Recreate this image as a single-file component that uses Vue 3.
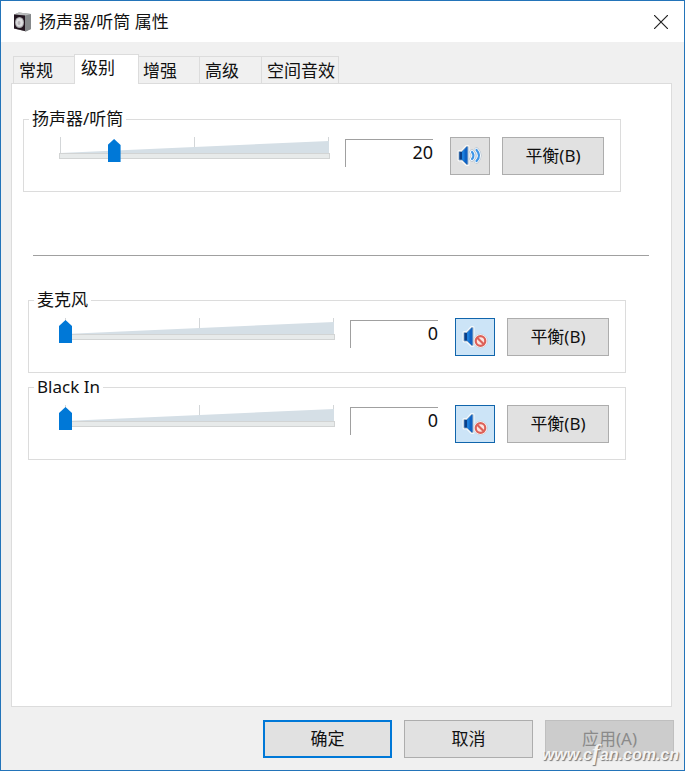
<script setup>
import { ref, reactive } from 'vue'

const tabs = ['常规', '级别', '增强', '高级', '空间音效']
const activeTab = ref('级别')

const output = reactive([{ id: 'speaker', name: '扬声器/听筒', level: 20, muted: false }])
const inputs = reactive([
  { id: 'mic', name: '麦克风', level: 0, muted: true },
  { id: 'black', name: 'Black In', level: 0, muted: true },
])
const sections = [
  { key: 'output', channels: output },
  { key: 'input', channels: inputs },
]
</script>

<template>
  <main class="window">
    <header class="titlebar">
      <svg class="app-icon" viewBox="0 0 18 20" aria-hidden="true">
        <path d="M0 2.500 L5 .5 L17 2 V17 L12 19.500 L0 16.500Z" fill="#8b8b8b" />
        <path d="M11 3.300 L17 2 V17 L11 19.500Z" fill="#85888a" />
        <path d="M0 2.500 L5 .5 L17 2 L11 3.500Z" fill="#b9bbbc" />
        <path d="M0 2.500 L11 3.500 V19 L0 16.500Z" fill="#231520" />
        <ellipse cx="5.500" cy="10.500" rx="4.500" ry="5.600" fill="#a9a9ab" />
        <ellipse cx="5.500" cy="10.500" rx="3.400" ry="4.300" fill="#dedee0" />
        <ellipse cx="5" cy="11" rx="1.500" ry="2" fill="#b8b4b8" />
      </svg>
      <h1 class="title">扬声器/听筒 属性</h1>
      <button class="close" type="button" aria-label="关闭">
        <svg viewBox="0 0 14 14" aria-hidden="true">
          <path d="M0 0 L14 14 M14 0 L0 14" stroke="#222" stroke-width="1.200" fill="none" />
        </svg>
      </button>
    </header>

    <div class="tabs" role="tablist">
      <button
        v-for="tab in tabs"
        :key="tab"
        type="button"
        role="tab"
        class="tab"
        :class="{ active: tab === activeTab }"
        :aria-selected="tab === activeTab"
        @click="activeTab = tab"
      >{{ tab }}</button>
    </div>

    <section class="panel">
      <div v-for="section in sections" :key="section.key" class="section" :class="section.key">
        <fieldset v-for="ch in section.channels" :key="ch.id" class="group">
          <legend>{{ ch.name }}</legend>
          <div class="row">
            <div class="slider">
              <div class="scale">
                <div class="wedge"></div>
                <i></i><i></i><i></i>
              </div>
              <input v-model.number="ch.level" type="range" min="0" max="100" :aria-label="ch.name + ' 音量'" />
            </div>
            <input v-model.number="ch.level" class="value" type="text" :aria-label="ch.name + ' 级别'" />
            <button
              type="button"
              class="btn mute"
              :class="{ muted: ch.muted }"
              :aria-pressed="ch.muted"
              aria-label="静音"
              @click="ch.muted = !ch.muted"
            >
              <svg viewBox="0 0 26 24" aria-hidden="true">
                <path
                  d="M2 7.500 H5 L9.500 2.500 H11 V20.500 H9.500 L5 16 H2Z"
                  fill="none" stroke="#fff" stroke-opacity=".75" stroke-width="3" stroke-linejoin="round"
                />
                <path
                  d="M2 7.500 H5 L9.500 2.500 H11 V20.500 H9.500 L5 16 H2Z"
                  fill="#0f62c4" stroke="#9fb4c8" stroke-width="1"
                />
                <path d="M2.500 8 H5 V15.500 H2.500Z" fill="#0b3f86" />
                <path d="M5 8 L7.500 5.500 V17.800 L5 15.500Z" fill="#1d7fdc" />
                <template v-if="ch.muted">
                  <circle cx="18.500" cy="16" r="6.900" fill="#fff" stroke="#b9c3cc" stroke-width=".6" />
                  <circle cx="18.500" cy="16" r="4.800" fill="#fbe4e0" stroke="#dc6159" stroke-width="2.200" />
                  <path d="M15.200 12.700 L21.800 19.300" stroke="#dc6159" stroke-width="2.200" />
                </template>
                <g v-else fill="none" stroke-linecap="round">
                  <path d="M15 8 Q18 11.500 15 15 M19.500 6 Q24.500 11.500 19.500 17" stroke="#b5c2ce" stroke-width="5" />
                  <path d="M15 8 Q18 11.500 15 15 M19.500 6 Q24.500 11.500 19.500 17" stroke="#f5faff" stroke-width="4" />
                  <path d="M15 8 Q18 11.500 15 15 M19.500 6 Q24.500 11.500 19.500 17" stroke="#3d95e6" stroke-width="2.200" />
                </g>
              </svg>
            </button>
            <button type="button" class="btn balance">平衡(B)</button>
          </div>
        </fieldset>
      </div>
    </section>

    <footer class="actions">
      <button type="button" class="btn primary">确定</button>
      <button type="button" class="btn">取消</button>
      <button type="button" class="btn" disabled>应用(A)</button>
      <span class="watermark">www.c<em>f</em>an.com.cn</span>
    </footer>
  </main>
</template>

<style>
body {
  margin: 0;
}
</style>

<style scoped>
.window {
  box-sizing: border-box;
  min-height: 100vh;
  display: flex;
  flex-direction: column;
  border: 1px solid #2374b9;
  background: #f0f0f0;
  color: #111;
  font: 17px/24px "Noto Sans", "Noto Sans CJK SC", sans-serif;
}

button,
input {
  box-sizing: border-box;
  margin: 0;
  font: inherit;
  color: inherit;
}

.titlebar {
  display: flex;
  align-items: center;
  height: 41px;
  padding: 0 16px 0 13px;
  background: #fff;
}

.app-icon {
  width: 18px;
  height: 20px;
}

.title {
  flex: 1;
  margin: 0 0 0 7px;
  font: inherit;
}

.close {
  display: flex;
  padding: 0;
  border: 0;
  background: none;
}

.close svg {
  width: 14px;
  height: 14px;
}

.tabs {
  display: flex;
  align-items: flex-end;
  height: 29px;
  padding: 12px 12px 0;
}

.tab {
  min-width: 62px;
  height: 27px;
  padding: 1px 3px 0 5px;
  border: 1px solid #dcdcdc;
  border-width: 1px 0 0 1px;
  background: #f0f0f0;
  text-align: left;
  line-height: 24px;
}

.tab:last-child {
  border-right-width: 1px;
}

.tab.active {
  z-index: 1;
  min-width: 65px;
  height: 30px;
  margin: 0 -2px -1px -1px;
  padding: 0 6px 3px;
  border-right-width: 1px;
  background: #fff;
}

.panel {
  flex: 1;
  margin: 0 12px 0 10px;
  padding-top: 23px;
  border: 1px solid #dcdcdc;
  background: #fff;
}

.section {
  display: flex;
  flex-direction: column;
  gap: 2px;
}

.section.output {
  padding: 0 50px 0 11px;
}

.section.input {
  padding: 0 45px 0 16px;
}

.section.input::before {
  content: "";
  height: 1px;
  margin: 63px -23px 30px 5px;
  background: #a0a0a0;
}

.group {
  min-width: 0;
  margin: 0;
  padding: 6px 16px 16px 30px;
  border: 1px solid #dcdcdc;
}

.group legend {
  margin-left: -25px;
  padding: 0 3px;
}

.row {
  display: flex;
  align-items: flex-start;
}

.slider {
  position: relative;
  flex: 1;
  min-width: 0;
}

.scale {
  position: relative;
  display: flex;
  justify-content: space-between;
  height: 22px;
  margin: 0 5px;
  padding: 0 1px;
  box-sizing: border-box;
}

.scale::after {
  content: "";
  position: absolute;
  inset: 16px 0 0;
  border: 1px solid #d2d4d4;
  background: #e7eaea;
}

.scale i {
  width: 1px;
  height: 16px;
  background: #d3d6d8;
}

.wedge {
  position: absolute;
  inset: 4px 1px 6px;
  background: #d5dfe6;
  clip-path: polygon(0 100%, 100% 0, 100% 100%);
}

.slider input {
  position: absolute;
  inset: 2px 0 auto;
  width: 100%;
  height: 23px;
  appearance: none;
  background: none;
}

.slider input::-webkit-slider-thumb {
  appearance: none;
  width: 13px;
  height: 23px;
  background: #0078d7;
  clip-path: polygon(50% 0, 100% 6px, 100% 100%, 0 100%, 0 6px);
}

.value {
  width: 88px;
  height: 28px;
  margin: 2px 17px 0 10px;
  padding: 0 0 4px;
  border: solid #a0a0a0;
  border-width: 1px 0 0 1px;
  background: #fff;
  font-size: 18px;
  line-height: 22px;
  text-align: right;
}

.btn {
  height: 38px;
  padding: 0;
  border: 1px solid #adadad;
  background: #e1e1e1;
}

.mute {
  display: flex;
  align-items: center;
  justify-content: center;
  width: 40px;
  margin-right: 12px;
}

.mute.muted {
  border-color: #1065ac;
  background: #cce4f7;
}

.mute svg {
  width: 26px;
  height: 24px;
}

.balance {
  width: 102px;
}

.actions {
  position: relative;
  display: flex;
  justify-content: flex-end;
  gap: 12px;
  padding: 13px 10px 12px;
}

.actions .btn {
  width: 129px;
}

.actions .primary {
  border: 2px solid #0078d7;
}

.actions .btn:disabled {
  border-color: #bfbfbf;
  background: #ccc;
  color: #8a8a8a;
}

.watermark {
  position: absolute;
  right: 5px;
  bottom: 3px;
  color: #f4f4f4;
  font: italic bold 16px/24px "Liberation Sans", sans-serif;
  text-shadow: 1px 1px 1px #777;
  pointer-events: none;
}

.watermark em {
  font: italic bold 24px/16px "Liberation Serif", serif;
}
</style>
